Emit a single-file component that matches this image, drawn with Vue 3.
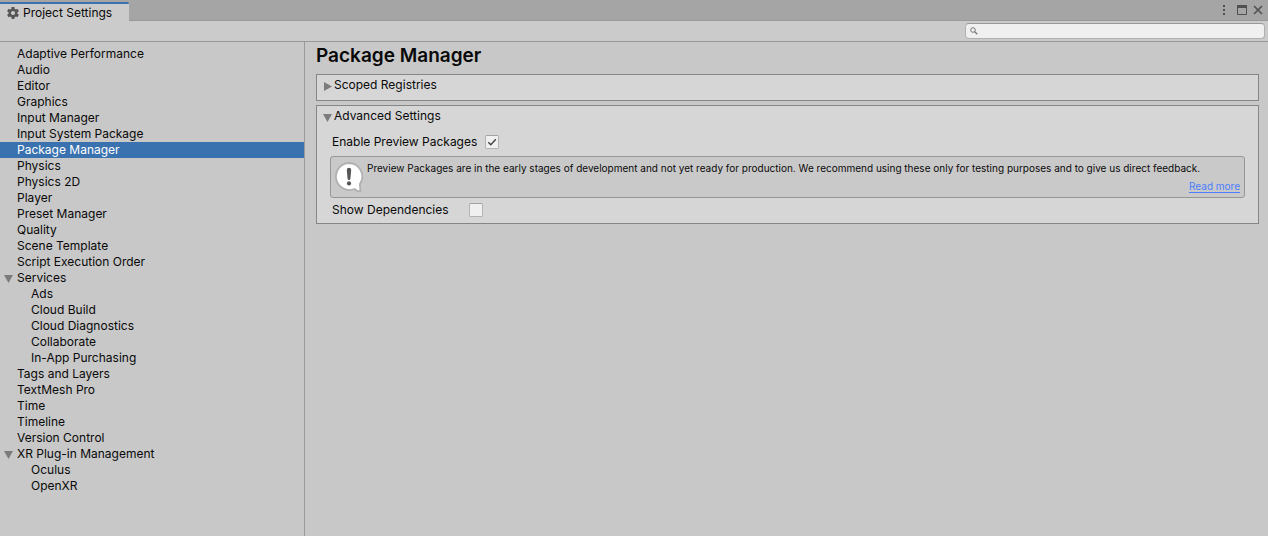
<script setup>
import { ref } from 'vue'

const items = [
  { name: 'Adaptive Performance' },
  { name: 'Audio' },
  { name: 'Editor' },
  { name: 'Graphics' },
  { name: 'Input Manager' },
  { name: 'Input System Package' },
  { name: 'Package Manager' },
  { name: 'Physics' },
  { name: 'Physics 2D' },
  { name: 'Player' },
  { name: 'Preset Manager' },
  { name: 'Quality' },
  { name: 'Scene Template' },
  { name: 'Script Execution Order' },
  { name: 'Services', group: true },
  { name: 'Ads', child: true },
  { name: 'Cloud Build', child: true },
  { name: 'Cloud Diagnostics', child: true },
  { name: 'Collaborate', child: true },
  { name: 'In-App Purchasing', child: true },
  { name: 'Tags and Layers' },
  { name: 'TextMesh Pro' },
  { name: 'Time' },
  { name: 'Timeline' },
  { name: 'Version Control' },
  { name: 'XR Plug-in Management', group: true },
  { name: 'Oculus', child: true },
  { name: 'OpenXR', child: true },
]

const selected = ref('Package Manager')
const search = ref('')
const preview = ref(true)
const dependencies = ref(false)
</script>

<template>
  <div class="window">
    <header class="tabbar">
      <button class="tab" type="button">
        <svg class="gear" viewBox="0 0 12 12" aria-hidden="true">
          <g fill="#555">
            <rect v-for="a in [0, 60, 120]" :key="a" x="4.5" y="0" width="3" height="12" rx="0.4" :transform="`rotate(${a} 6 6)`" />
          </g>
          <circle cx="6" cy="6" r="3.4" fill="none" stroke="#555" stroke-width="2.2" />
          <circle cx="6" cy="6" r="2.100" fill="#cbcbcb" />
        </svg>
        <span>Project Settings</span>
      </button>
      <div class="controls">
        <button type="button" aria-label="Menu">
          <svg class="dots" viewBox="0 0 4 12"><path d="M1 1h2v2H1zM1 5h2v2H1zM1 9h2v2H1z" fill="#505050" /></svg>
        </button>
        <button type="button" aria-label="Maximize">
          <svg class="max" viewBox="0 0 10 10"><path d="M.5 .5h9v9h-9z" fill="none" stroke="#505050" /><path d="M0 0h10v3H0z" fill="#505050" /></svg>
        </button>
        <button type="button" aria-label="Close">
          <svg class="max" viewBox="0 0 10 10"><path d="M1 1l8 8M9 1l-8 8" fill="none" stroke="#505050" stroke-width="1.6" /></svg>
        </button>
      </div>
    </header>

    <div class="toolbar">
      <label class="search">
        <svg viewBox="0 0 8 8" aria-hidden="true">
          <circle cx="3" cy="3" r="2.3" fill="none" stroke="#777" />
          <path d="M4.7 4.7l2.6 2.6" stroke="#777" stroke-width="1.3" />
        </svg>
        <input v-model="search" type="text" aria-label="Search settings">
      </label>
    </div>

    <div class="body">
      <nav class="sidebar">
        <button
          v-for="item in items"
          :key="item.name"
          type="button"
          class="item"
          :class="{ child: item.child, selected: item.name === selected }"
          @click="selected = item.name"
        >
          <span class="slot">
            <svg v-if="item.group" class="arrow" viewBox="0 0 9 8"><path d="M0 0h9L4.5 8z" fill="#7c7c7c" /></svg>
          </span>
          <span>{{ item.name }}</span>
        </button>
      </nav>

      <main class="main">
        <h1>Package Manager</h1>

        <section class="box closed">
          <button class="fold" type="button" aria-expanded="false">
            <svg class="arrow right" viewBox="0 0 8 9"><path d="M0 0v9l8-4.500z" fill="#7c7c7c" /></svg>
            <span>Scoped Registries</span>
          </button>
        </section>

        <section class="box">
          <button class="fold" type="button" aria-expanded="true">
            <svg class="arrow" viewBox="0 0 9 8"><path d="M0 0h9L4.5 8z" fill="#7c7c7c" /></svg>
            <span>Advanced Settings</span>
          </button>

          <div class="field first">
            <label for="preview">Enable Preview Packages</label>
            <span class="check">
              <input id="preview" v-model="preview" type="checkbox">
              <svg v-if="preview" viewBox="0 0 14 14"><path d="M3.300 7.200l2.500 2.500 5-5.400" fill="none" stroke="#444" stroke-width="1.500" /></svg>
            </span>
          </div>

          <div class="info">
            <svg class="bubble" viewBox="0 0 30 32" aria-hidden="true">
              <path d="M15 2a13.500 13.500 0 1 0 5.500 26c1.500 1.400 3.300 2.400 5.900 2.600l-.5-7.500A13.500 13.500 0 0 0 15 2z" fill="#fff" stroke="#b0b0b0" stroke-width="1.800" stroke-linejoin="round" />
              <path d="M12.800 9q0-2.200 2.200-2.200t2.200 2.200l-.8 8.800q-.2 1.200-1.400 1.200t-1.400-1.200z" fill="#555" />
              <circle cx="15" cy="22.400" r="2.100" fill="#555" />
            </svg>
            <div class="message">
              <p>Preview Packages are in the early stages of development and not yet ready for production. We recommend using these only for testing purposes and to give us direct feedback.</p>
              <a href="#">Read more</a>
            </div>
          </div>

          <div class="field">
            <label for="dependencies" class="short">Show Dependencies</label>
            <span class="check">
              <input id="dependencies" v-model="dependencies" type="checkbox">
              <svg v-if="dependencies" viewBox="0 0 14 14"><path d="M3.300 7.200l2.500 2.500 5-5.400" fill="none" stroke="#444" stroke-width="1.500" /></svg>
            </span>
          </div>
        </section>
      </main>
    </div>
  </div>
</template>

<style>
body {
  background: #c8c8c8;
}
</style>

<style scoped>
.window {
  display: flex;
  flex-direction: column;
  min-height: 100vh;
  background: #c8c8c8;
  color: #090909;
  font: 12px/16px Inter, "Liberation Sans", sans-serif;
}
.window * {
  box-sizing: border-box;
}
button {
  margin: 0;
  padding: 0;
  border: 0;
  background: none;
  color: inherit;
  font: inherit;
  text-align: left;
}
svg {
  display: block;
  flex: none;
}
.tabbar {
  display: flex;
  justify-content: space-between;
  height: 21px;
  background: #a5a5a5;
  box-shadow: inset 0 -1px #999;
}
.tab {
  display: flex;
  align-items: center;
  gap: 4px;
  margin-top: 2px;
  padding: 0 17px 0 7px;
  border-top: 2px solid #3a72b0;
  border-top-right-radius: 2px;
  background: #cbcbcb;
}
.gear {
  width: 12px;
  height: 12px;
}
.controls {
  display: flex;
  align-items: center;
  gap: 6px;
  padding: 0 5px 1px 0;
}
.dots {
  width: 4px;
  height: 12px;
  margin-right: 5px;
}
.max {
  width: 10px;
  height: 10px;
}
.toolbar {
  display: flex;
  justify-content: flex-end;
  align-items: center;
  height: 21px;
  padding-right: 3px;
  border-bottom: 1px solid #999;
  background: #cbcbcb;
}
.search {
  display: flex;
  align-items: center;
  gap: 4px;
  width: 300px;
  height: 16px;
  padding: 0 4px;
  border: 1px solid #b0b0b0;
  border-top-color: #999;
  border-radius: 4px;
  background: #f0f0f0;
}
.search svg {
  width: 8px;
  height: 8px;
}
.search input {
  flex: 1;
  min-width: 0;
  height: 12px;
  padding: 0;
  border: 0;
  outline: 0;
  background: none;
  font: inherit;
}
.body {
  display: flex;
  flex: 1;
}
.sidebar {
  display: flex;
  flex-direction: column;
  flex: 0 0 305px;
  padding-top: 4px;
  border-right: 1px solid #999;
}
.item {
  display: flex;
  align-items: center;
  height: 16px;
}
.slot {
  width: 17px;
  padding: 2px 0 0 4px;
}
.child .slot {
  width: 31px;
}
.selected {
  background: #3a72b0;
  color: #fff;
}
.arrow {
  width: 9px;
  height: 8px;
}
.arrow.right {
  width: 8px;
  height: 9px;
  margin-left: 1px;
}
.main {
  flex: 1;
  min-width: 0;
  padding: 2px 9px 0 11px;
}
h1 {
  margin: 0 0 6px;
  font-size: 19px;
  line-height: 24px;
  font-weight: 600;
}
.box {
  padding: 2px 13px 5px;
  border: 1px solid #868686;
  background: #d6d6d6;
}
.closed {
  margin-bottom: 4px;
  padding-bottom: 7px;
}
.fold {
  display: flex;
  align-items: center;
  gap: 2px;
  height: 16px;
  margin-left: -7px;
}
.fold .arrow {
  margin-top: 3px;
}
.field {
  display: flex;
  align-items: center;
  gap: 8px;
  height: 16px;
  padding-left: 2px;
}
.field.first {
  margin: 10px 0 6px;
}
.short {
  width: 129px;
}
.check {
  display: grid;
  width: 14px;
  height: 14px;
}
.check > * {
  grid-area: 1 / 1;
}
.check input {
  appearance: none;
  width: 14px;
  height: 14px;
  margin: 0;
  border: 1px solid #b2b2b2;
  border-top-color: #a2a2a2;
  border-radius: 2px;
  background: #f0f0f0;
}
.check svg {
  width: 14px;
  height: 14px;
  pointer-events: none;
}
.info {
  display: flex;
  min-height: 42px;
  margin-bottom: 4px;
  padding: 4px 4px 3px 3px;
  border: 1px solid #969696;
  border-radius: 3px;
  background: #c9c9c9;
}
.bubble {
  width: 30px;
  height: 32px;
}
.message {
  display: flex;
  flex: 1;
  flex-direction: column;
  align-items: flex-end;
  gap: 5px;
  padding: 1px 0 0 3px;
  font-size: 10px;
  line-height: 13px;
}
.message p {
  width: 100%;
  margin: 0;
}
.message a {
  height: 13px;
  border-bottom: 1px solid #4c7eff;
  color: #4c7eff;
  text-decoration: none;
}
</style>
